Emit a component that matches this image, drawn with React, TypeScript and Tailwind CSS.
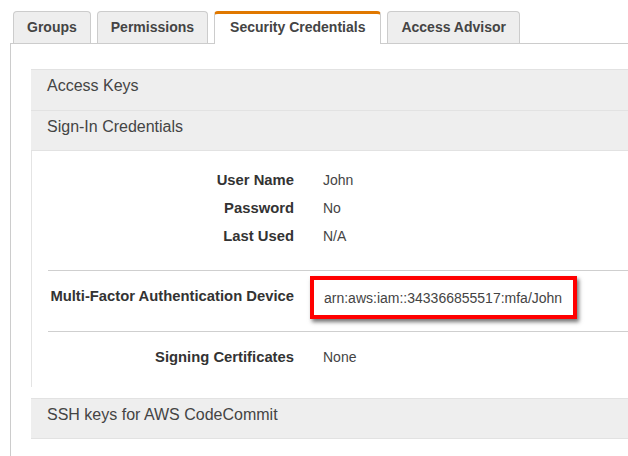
import React from "react";

const tabs = [
  { label: "Groups", active: false },
  { label: "Permissions", active: false },
  { label: "Security Credentials", active: true },
  { label: "Access Advisor", active: false },
];

function Row({ label, value }: { label: string; value: string }) {
  return (
    <div className="flex h-[28px] items-center">
      <div className="w-[246px] text-right text-[14.8px] font-bold text-[#333]">{label}</div>
      <div className="pl-[29px] text-[#444]">{value}</div>
    </div>
  );
}

export default function App() {
  return (
    <div
      className="w-[628px] h-[456px] overflow-hidden bg-white text-[14px] leading-[20px]"
      style={{ fontFamily: '"Liberation Sans", Arial, sans-serif' }}
    >
      <div className="pl-[10px] pt-[11px] w-[900px]">
        <div className="flex items-end gap-[6px] pl-[3px]">
          {tabs.map((t) =>
            t.active ? (
              <div
                key={t.label}
                className="relative z-10 -mb-px h-[33px] rounded-t-[4px] border-x border-t-[3px] border-x-[#ccc] border-t-[#e07800] bg-white px-[15px] pt-[3px] font-bold text-[#444]"
              >
                {t.label}
              </div>
            ) : (
              <div
                key={t.label}
                className="h-[32px] rounded-t-[4px] border border-b-0 border-[#ccc] bg-[#eeeeee] px-[13px] pt-[5px] font-bold text-[#444]"
              >
                {t.label}
              </div>
            )
          )}
        </div>
        <div className="border-l border-t border-[#cccccc] pl-[20px] pt-[25px] h-[420px]">
          <div className="text-[16px] text-[#444]">
            <div className="h-[41px] border-t border-[#e2e2e2] bg-[#eeeeee] px-[16px] pt-[6px]">
              Access Keys
            </div>
            <div className="h-[41px] border-y border-[#e2e2e2] bg-[#eeeeee] px-[16px] pt-[6px]">
              Sign-In Credentials
            </div>
          </div>
          <div className="border-l border-[#e4e4e4] pl-[16px]">
            <div className="pt-[15px] pb-[20px]">
              <Row label="User Name" value="John" />
              <Row label="Password" value="No" />
              <Row label="Last Used" value="N/A" />
            </div>
            <div className="flex border-t border-[#cfcfcf] pt-[5px] pb-[12px]">
              <div className="w-[246px] pt-[10px] text-right text-[14.8px] font-bold text-[#333]">
                Multi-Factor Authentication Device
              </div>
              <div className="ml-[16px] border-4 border-[#ff0000] bg-white pl-[10px] pr-[11px] pt-[8px] pb-[7px] text-[#444] shadow-[2px_3px_4px_rgba(0,0,0,0.55)]">
                arn:aws:iam::343366855517:mfa/John
              </div>
            </div>
            <div className="border-t border-[#cfcfcf] pt-[11px] pb-[16px]">
              <Row label="Signing Certificates" value="None" />
            </div>
          </div>
          <div className="mt-[11px] h-[41px] border-y border-[#e2e2e2] bg-[#eeeeee] px-[16px] pt-[6px] text-[16px] text-[#444]">
            SSH keys for AWS CodeCommit
          </div>
        </div>
      </div>
    </div>
  );
}
